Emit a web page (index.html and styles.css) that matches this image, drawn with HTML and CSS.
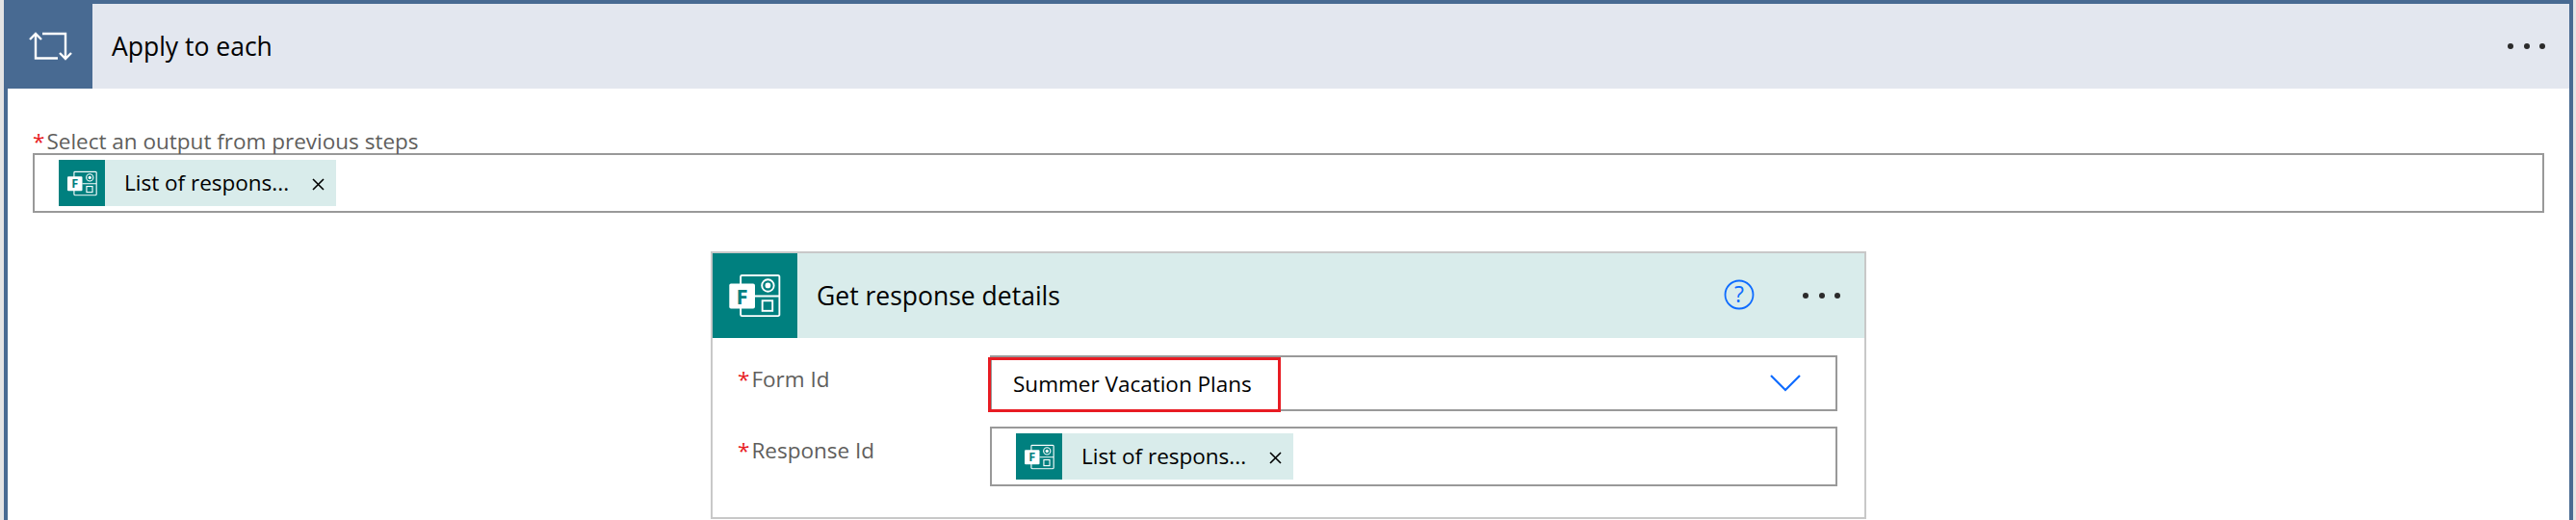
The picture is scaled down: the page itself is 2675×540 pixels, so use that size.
FILE: index.html
```html
<!DOCTYPE html>
<html lang="en">
<head>
  <meta charset="UTF-8" />
  <title>Apply to each</title>
  <link rel="stylesheet" href="styles.css">
</head>
<body>
  <svg class="defs" width="0" height="0">
    <symbol id="formsIcon" viewBox="0 0 56 48">
      <path d="M14 2h39a1.500 1.500 0 0 1 1.500 1.500v41a1.500 1.500 0 0 1-1.500 1.500h-39a1.500 1.500 0 0 1-1.500-1.500v-41a1.500 1.500 0 0 1 1.500-1.500zM28 24.500h27" fill="none" stroke="#fff" stroke-width="2" />
      <rect x="0" y="11" width="28" height="27" rx="2" fill="#fff" />
      <circle cx="42" cy="13" r="6.500" fill="none" stroke="#fff" stroke-width="2" />
      <circle cx="42" cy="13" r="3" fill="#fff" />
      <rect x="36" y="29.500" width="11" height="11" fill="none" stroke="#fff" stroke-width="2" />
    </symbol>
  </svg>

  <div class="loop">
    <div class="loop-head">
      <div class="loop-icon">
        <svg width="92" height="88" viewBox="4 4 92 88" fill="none" stroke="#fff" stroke-width="2.400">
          <path d="M37 35V60.500H60" />
          <path d="M31 41l6-6 6 6" />
          <path d="M44 35H68V60" />
          <path d="M62 55l6 6 6-6" />
        </svg>
      </div>
      <div class="head-title">Apply to each</div>
      <div class="dots"><i></i><i></i><i></i></div>
    </div>

    <div class="loop-body">
      <div class="field-label"><span class="req">*</span>Select an output from previous steps</div>
      <div class="input-box">
        <div class="token">
          <div class="token-icon">
            <svg width="31" height="27" viewBox="0 0 56 48"><use href="#formsIcon" /><text class="forms-f" x="14" y="33">F</text></svg>
          </div>
          <span class="token-text">List of respons...</span>
          <svg class="token-x" width="13" height="13" viewBox="0 0 13 13" stroke="#000" stroke-width="1.600"><path d="M1 1l11 11M12 1L1 12" /></svg>
        </div>
      </div>

      <div class="card">
        <div class="card-head">
          <div class="card-icon">
            <svg width="54" height="46" viewBox="0 0 56 48"><use href="#formsIcon" /><text class="forms-f" x="14" y="33">F</text></svg>
          </div>
          <div class="head-title">Get response details</div>
          <svg class="help" width="32" height="32" viewBox="0 0 32 32">
            <circle cx="16" cy="16" r="14.500" fill="none" stroke="#0f6cff" stroke-width="1.800" />
            <text x="16" y="24">?</text>
          </svg>
          <div class="dots"><i></i><i></i><i></i></div>
        </div>
        <div class="card-body">
          <div class="row">
            <div class="row-label"><span class="req">*</span>Form Id</div>
            <div class="input-box select-box">
              <div class="picked">Summer Vacation Plans</div>
              <svg class="chevron" width="32" height="18" viewBox="0 0 32 18" fill="none" stroke="#0f6cff" stroke-width="2.200">
                <path d="M1 1l15 15L31 1" />
              </svg>
            </div>
          </div>
          <div class="row">
            <div class="row-label"><span class="req">*</span>Response Id</div>
            <div class="input-box">
              <div class="token">
                <div class="token-icon">
                  <svg width="31" height="27" viewBox="0 0 56 48"><use href="#formsIcon" /><text class="forms-f" x="14" y="33">F</text></svg>
                </div>
                <span class="token-text">List of respons...</span>
                <svg class="token-x" width="13" height="13" viewBox="0 0 13 13" stroke="#000" stroke-width="1.600"><path d="M1 1l11 11M12 1L1 12" /></svg>
              </div>
            </div>
          </div>
        </div>
      </div>
    </div>
  </div>
</body>
</html>
```

FILE: styles.css
```css
:root {
  --blue: #486a92;
  --blue-light: #e3e7ef;
  --teal: #00807f;
  --teal-light: #d9eceb;
  --line: #999999;
}

html, body {
  margin: 0;
  height: 540px;
  overflow: hidden;
}

body {
  background-color: #e4e4e4;
  padding: 0 3px 0 4px;
  box-sizing: border-box;
  font-family: 'Open Sans', 'Noto Sans', sans-serif;
  color: #000;
}

.defs {
  position: absolute;
}

.forms-f {
  font-family: 'Open Sans', sans-serif;
  font-size: 23px;
  font-weight: 700;
  text-anchor: middle;
  fill: #00807f;
}

.loop {
  height: 540px;
  box-sizing: border-box;
  background-color: #fff;
  border: 4px solid var(--blue);
  border-bottom: none;
}

.loop-head {
  display: flex;
  align-items: center;
  height: 88px;
  background-color: var(--blue-light);
}

.loop-icon {
  display: flex;
  flex-shrink: 0;
  width: 92px;
  height: 88px;
  margin-left: -4px;
  background-color: var(--blue);
}

.head-title {
  flex: 1;
  margin-left: 20px;
  font-size: 26.500px;
}

.dots {
  display: flex;
  gap: 10.500px;
  margin-right: 25px;
}

.dots i {
  width: 6px;
  height: 6px;
  border-radius: 50%;
  background-color: #2b2b2b;
}

.loop-body {
  padding: 43px 26px 0 26px;
}

.field-label {
  font-size: 22.500px;
  line-height: 24px;
  color: #605e5c;
}

.req {
  color: #e81c23;
  margin-right: 2px;
}

.input-box {
  display: flex;
  align-items: center;
  height: 62px;
  box-sizing: border-box;
  border: 2px solid var(--line);
  padding-left: 25px;
}

.token {
  display: flex;
  align-items: center;
  width: 288px;
  height: 48px;
  background-color: var(--teal-light);
}

.token-icon {
  display: flex;
  align-items: center;
  justify-content: center;
  width: 48px;
  height: 48px;
  background-color: var(--teal);
}

.token-text {
  margin: 0 0 2px 20px;
  font-size: 22.500px;
}

.token-x {
  margin: 2px 12px 0 auto;
}

.card {
  width: 1200px;
  margin: 40px auto 0;
  height: 278px;
  box-sizing: border-box;
  border: 2px solid #c8c8c8;
}

.card-head {
  display: flex;
  align-items: center;
  height: 88px;
  background-color: var(--teal-light);
}

.card-icon {
  display: flex;
  align-items: center;
  justify-content: center;
  width: 88px;
  height: 88px;
  background-color: var(--teal);
}

.help {
  margin: 0 50px 2px 0;
}

.help text {
  font-size: 23px;
  text-anchor: middle;
  fill: #0f6cff;
}

.card-body {
  display: flex;
  flex-direction: column;
  gap: 16px;
  padding: 18px 28px 0 26px;
}

.row {
  display: flex;
}

.row-label {
  width: 262px;
  padding-top: 10px;
  font-size: 22.500px;
  line-height: 30px;
  color: #605e5c;
}

.row .input-box {
  flex: 1;
}

.select-box {
  justify-content: space-between;
  height: 58px;
  padding-left: 0;
  padding-right: 36px;
}

.picked {
  display: flex;
  align-items: center;
  align-self: flex-start;
  width: 304px;
  height: 57px;
  box-sizing: border-box;
  margin-left: -4px;
  padding: 0 0 2px 23px;
  border: 3px solid #e81c23;
  font-size: 22.500px;
}
```
